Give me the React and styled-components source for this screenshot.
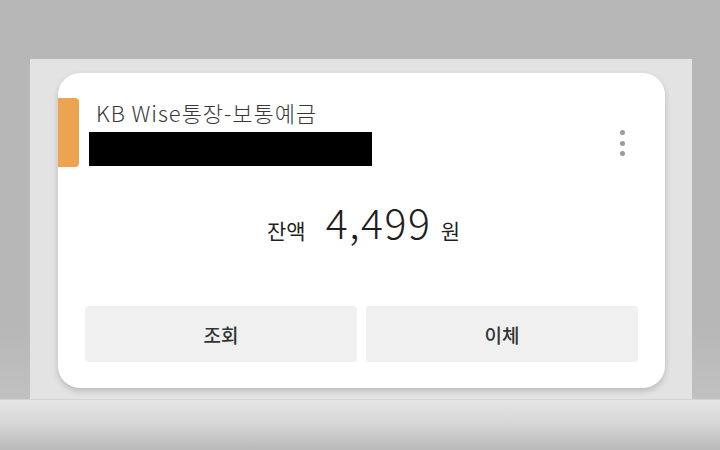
import React from "react";
import styled, { createGlobalStyle } from "styled-components";

const GlobalStyle = createGlobalStyle`
  html, body {
    margin: 0;
    padding: 0;
  }
  body {
    width: 720px;
    height: 450px;
    overflow: hidden;
    font-family: "Noto Sans CJK KR", "Noto Sans", sans-serif;
    background: linear-gradient(
      to bottom,
      #b6b7b6 0,
      #b6b7b6 330px,
      #c0c1c0 399px,
      #e6e6e6 400px,
      #d4d5d4 425px,
      #b9bab9 450px
    );
  }
`;

const Panel = styled.div`
  box-sizing: border-box;
  margin: 59px 28px 0 30px;
  height: 340px;
  padding: 14px 27px 11px 28px;
  background: #e3e3e3;
`;

const Card = styled.section`
  box-sizing: border-box;
  height: 315px;
  background: #ffffff;
  border-radius: 22px;
  box-shadow: 0 3px 6px rgba(0, 0, 0, 0.18);
  display: flex;
  flex-direction: column;
  padding-bottom: 26px;
`;

const Header = styled.div`
  display: flex;
  margin-top: 25px;
`;

const Marker = styled.div`
  width: 21px;
  height: 69px;
  background: #eda451;
  border-radius: 0 4px 4px 0;
  flex-shrink: 0;
`;

const Info = styled.div`
  margin-left: 10px;
  display: flex;
  flex-direction: column;
`;

const Title = styled.div`
  padding-left: 7px;
  font-size: 22px;
  font-weight: 300;
  line-height: 28px;
  color: #383838;
  letter-spacing: 0.95px;
`;

const Masked = styled.div`
  margin-top: 6px;
  width: 283px;
  height: 34px;
  background: #000;
`;

const Kebab = styled.button`
  margin: 32px 40px 0 auto;
  padding: 0;
  border: 0;
  background: none;
  display: flex;
  flex-direction: column;
  gap: 5.5px;
  align-self: flex-start;
`;

const Dot = styled.span`
  width: 5px;
  height: 5px;
  border-radius: 50%;
  background: #9a9a9a;
`;

const Balance = styled.div`
  margin-top: 30px;
  display: flex;
  justify-content: center;
  align-items: baseline;
  color: #1f1f1f;
  padding-left: 4px;
`;

const Label = styled.span`
  font-size: 21px;
  line-height: 48px;
`;

const Amount = styled.span`
  margin: 0 9px 0 20px;
  font-size: 41px;
  font-weight: 300;
  line-height: 48px;
  letter-spacing: 1.6px;
`;

const Actions = styled.div`
  margin-top: auto;
  display: grid;
  grid-template-columns: 1fr 1fr;
  gap: 9px;
  padding: 0 27px;
`;

const Action = styled.button`
  height: 56px;
  border: 0;
  border-radius: 4px;
  background: #f0f0f0;
  font-family: "Noto Sans CJK KR", sans-serif;
  font-size: 19px;
  font-weight: 500;
  color: #333;
`;

export default function App() {
  return (
    <>
      <GlobalStyle />
      <Panel>
        <Card>
          <Header>
            <Marker />
            <Info>
              <Title>KB Wise통장-보통예금</Title>
              <Masked />
            </Info>
            <Kebab aria-label="더보기">
              <Dot />
              <Dot />
              <Dot />
            </Kebab>
          </Header>
          <Balance>
            <Label>잔액</Label>
            <Amount>4,499</Amount>
            <Label>원</Label>
          </Balance>
          <Actions>
            <Action>조회</Action>
            <Action>이체</Action>
          </Actions>
        </Card>
      </Panel>
    </>
  );
}
